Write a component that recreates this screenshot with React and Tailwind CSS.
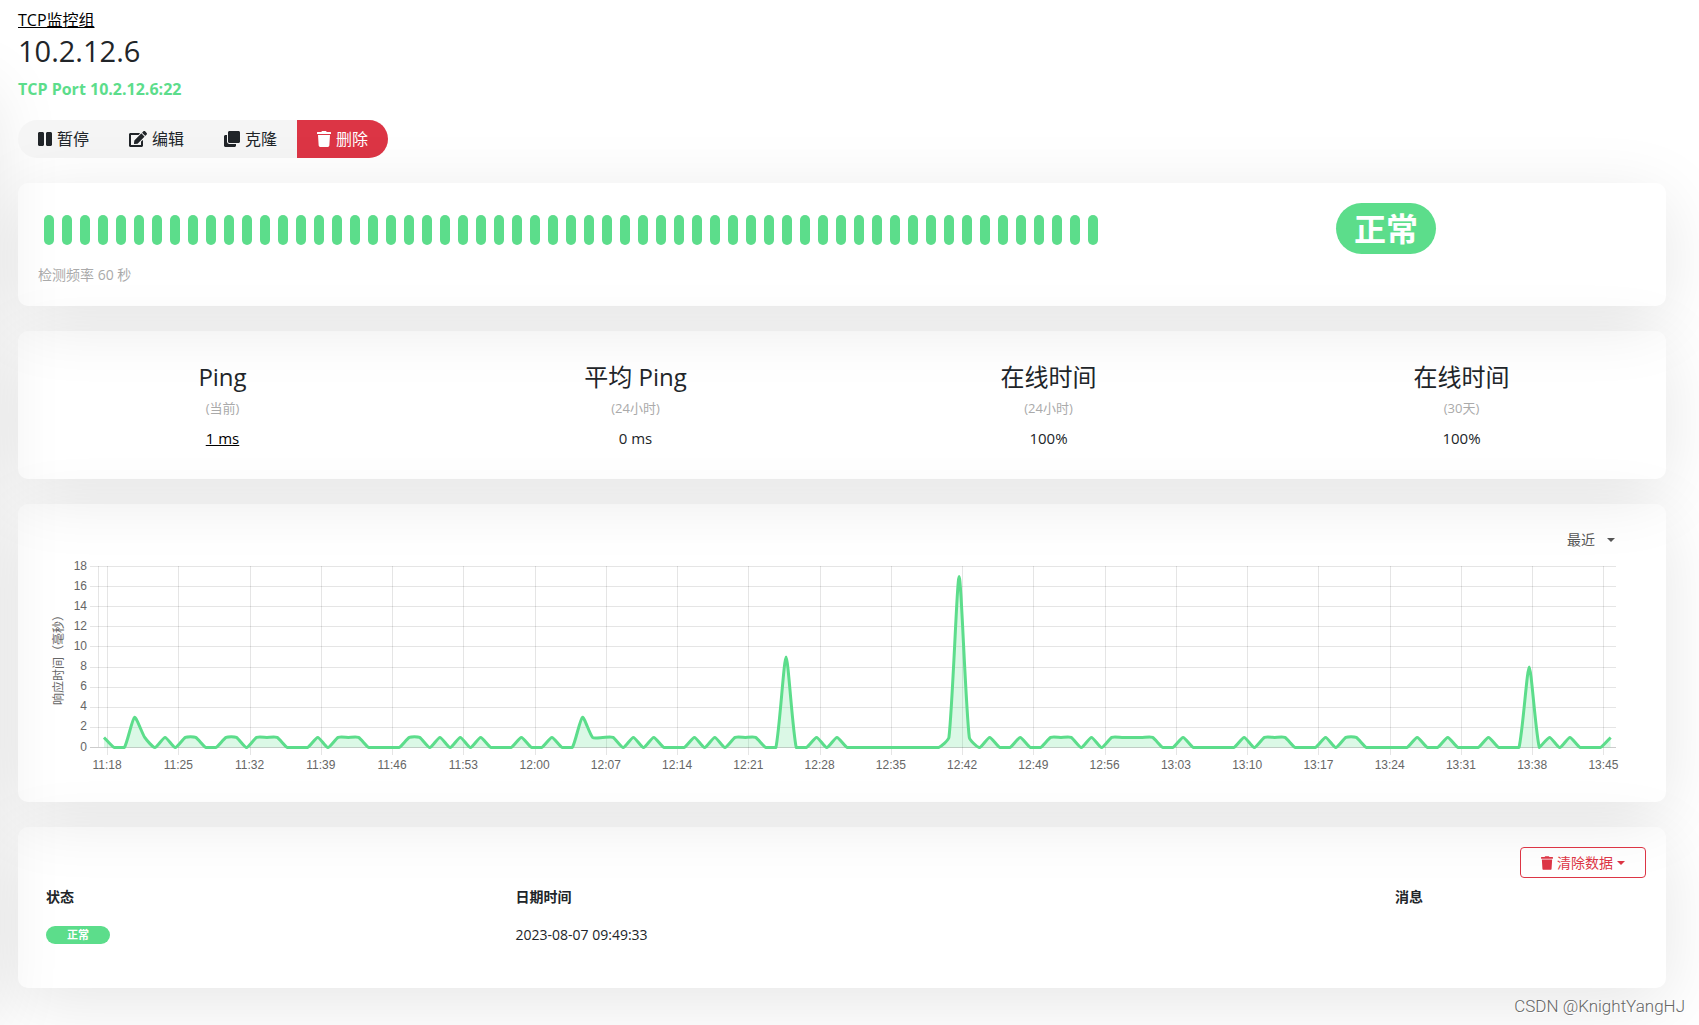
import { useMemo, useState } from "react";
import { FaPause, FaEdit, FaClone, FaTrash } from "react-icons/fa";

const BEAT_COUNT = 59;

const STATS = [
  { title: "Ping", range: "(当前)", value: "1 ms", link: true },
  { title: "平均 Ping", range: "(24小时)", value: "0 ms" },
  { title: "在线时间", range: "(24小时)", value: "100%" },
  { title: "在线时间", range: "(30天)", value: "100%" },
];

const EVENTS = [{ status: "正常", time: "2023-08-07 09:49:33", message: "" }];

// One sample per minute, starting at 11:18. Minutes that are not listed are 0 ms.
const PING_SPIKES = { 3: 3, 47: 3, 67: 9, 84: 17, 140: 8 };
const PING_ONES = [
  0, 4, 6, 8, 9, 12, 13, 15, 16, 17, 21, 23, 24, 25, 30, 31, 33, 35, 37, 41, 44,
  48, 49, 50, 52, 54, 58, 60, 62, 63, 64, 70, 72, 83, 85, 87, 90, 93, 94, 95,
  97, 99, 100, 101, 102, 103, 106, 112, 114, 115, 116, 120, 122, 123, 129, 132,
  136, 142, 144, 148,
];
const PINGS = Array.from(
  { length: 149 },
  (_, i) => PING_SPIKES[i] ?? (PING_ONES.includes(i) ? 1 : 0)
);

const X_LABELS = Array.from({ length: 22 }, (_, i) => {
  const total = 11 * 60 + 18 + i * 7;
  return `${Math.floor(total / 60)}:${String(total % 60).padStart(2, "0")}`;
});
const Y_LABELS = [0, 2, 4, 6, 8, 10, 12, 14, 16, 18];

const PLOT = { left: 60, right: 1578, top: 10, bottom: 191 };
const MINUTE = 10.18;

function toY(value) {
  return PLOT.bottom + 0.5 - (value / 18) * (PLOT.bottom - PLOT.top);
}

// Smooth line with a light tension, control points kept inside the plot
function buildPath(values) {
  const tension = 0.2;
  const points = values.map((v, i) => ({ x: 66 + i * MINUTE, y: toY(v) }));
  const clamp = (y) => Math.min(toY(0), Math.max(toY(18), y));

  const controls = points.map((p, i) => {
    const prev = points[i - 1] || p;
    const next = points[i + 1] || p;
    const d01 = Math.hypot(p.x - prev.x, p.y - prev.y);
    const d12 = Math.hypot(next.x - p.x, next.y - p.y);
    const fa = (tension * d01) / (d01 + d12);
    const fb = (tension * d12) / (d01 + d12);
    return {
      inX: p.x - fa * (next.x - prev.x),
      inY: clamp(p.y - fa * (next.y - prev.y)),
      outX: p.x + fb * (next.x - prev.x),
      outY: clamp(p.y + fb * (next.y - prev.y)),
    };
  });

  let line = `M${points[0].x} ${points[0].y}`;
  for (let i = 1; i < points.length; i++) {
    const a = controls[i - 1];
    const b = controls[i];
    line += `C${a.outX} ${a.outY} ${b.inX} ${b.inY} ${points[i].x} ${points[i].y}`;
  }
  const last = points[points.length - 1];
  return { line, area: `${line}L${last.x} ${toY(0)}L${points[0].x} ${toY(0)}Z` };
}

function Card({ className = "", children }) {
  return (
    <section
      className={`rounded-[10px] p-5 shadow-[0_15px_70px_rgba(0,0,0,0.1)] ${className}`}
    >
      {children}
    </section>
  );
}

function Caret() {
  return (
    <span className="inline-block border-x-4 border-t-4 border-x-transparent border-t-current" />
  );
}

function PingChart() {
  const { line, area } = useMemo(() => buildPath(PINGS), []);

  return (
    <svg
      viewBox="0 0 1608 226"
      className="block w-full"
      role="img"
      aria-label="响应时间（毫秒）"
      fontSize="12"
      fill="#666"
    >
      <g stroke="#000" strokeOpacity="0.1">
        {Y_LABELS.map((v) => {
          const y = Math.floor(toY(v)) + 0.5;
          return (
            <line
              key={v}
              x1={PLOT.left - 8}
              x2={PLOT.right}
              y1={y}
              y2={y}
              strokeOpacity={v === 0 ? 0.2 : 0.1}
            />
          );
        })}
        <line x1="60.5" x2="60.5" y1={PLOT.top} y2={PLOT.bottom} />
        {X_LABELS.map((label, i) => {
          const x = Math.round(69 + i * 7 * MINUTE) + 0.5;
          return (
            <line key={label} x1={x} x2={x} y1={PLOT.top} y2={PLOT.bottom + 8} />
          );
        })}
      </g>

      <path d={area} fill="#5cdd8b" fillOpacity="0.22" />
      <path
        d={line}
        fill="none"
        stroke="#5cdd8b"
        strokeWidth="3"
        strokeLinejoin="round"
      />

      <g className="font-['Liberation_Sans',sans-serif]">
        {Y_LABELS.map((v) => (
          <text key={v} x="49" y={toY(v) + 3} textAnchor="end">
            {v}
          </text>
        ))}
        {X_LABELS.map((label, i) => (
          <text key={label} x={69 + i * 7 * MINUTE} y="213" textAnchor="middle">
            {label}
          </text>
        ))}
      </g>
      <text transform="translate(25 101) rotate(-90)" textAnchor="middle">
        响应时间（毫秒）
      </text>
    </svg>
  );
}

export default function App() {
  const [paused, setPaused] = useState(false);

  return (
    <div className="relative min-h-screen overflow-hidden bg-white font-['Open_Sans','Noto_Sans_CJK_SC',sans-serif] text-[#212529]">
      {/* Monitor list, collapsed past the left edge */}
      <div className="absolute top-[75px] right-full bottom-4 mr-1.5 w-96 rounded-[10px] shadow-[0_15px_70px_rgba(0,0,0,0.1)]" />

      <main className="relative flex flex-col gap-[25px] pt-2 pr-[33px] pl-[18px]">
        <header>
          <a href="#group" className="block w-fit text-base text-black underline">
            TCP监控组
          </a>
          <h1 className="text-[29px] leading-[38px]">10.2.12.6</h1>
          <p className="mt-2 text-base leading-[22px] font-bold text-[#5cdd8b]">
            TCP Port 10.2.12.6:22
          </p>

          <div className="mt-5 flex h-[38px] w-fit overflow-hidden rounded-full bg-[#f5f5f5]">
            <button
              type="button"
              onClick={() => setPaused((value) => !value)}
              aria-pressed={paused}
              className="flex items-center gap-[5px] px-5"
            >
              <FaPause className="w-3.5" /> 暂停
            </button>
            <button type="button" className="flex items-center gap-[5px] px-5">
              <FaEdit className="w-[18px]" /> 编辑
            </button>
            <button type="button" className="flex items-center gap-[5px] px-5">
              <FaClone className="w-4" /> 克隆
            </button>
            <button
              type="button"
              className="flex items-center gap-[5px] bg-[#dc3545] px-5 text-white"
            >
              <FaTrash className="w-3.5" /> 删除
            </button>
          </div>
        </header>

        <Card>
          <div className="-mx-3 grid grid-cols-3">
            <div className="col-span-2 px-3">
              <div className="flex gap-2 overflow-hidden pt-3 pb-5 pl-1.5">
                {Array.from({ length: BEAT_COUNT }, (_, i) => (
                  <span
                    key={i}
                    className="h-[30px] w-2.5 shrink-0 rounded-full bg-[#5cdd8b]"
                  />
                ))}
              </div>
              <p className="mb-px text-sm leading-5 text-[#aaa]">检测频率 60 秒</p>
            </div>
            <div className="px-3 text-center">
              <span className="inline-block rounded-full bg-[#5cdd8b] px-[18px] text-[32px] leading-[51px] font-bold text-white">
                正常
              </span>
            </div>
          </div>
        </Card>

        <Card>
          <div className="-mx-[22px] grid grid-cols-4 pt-3 pb-[9px] text-center">
            {STATS.map((stat) => (
              <div key={stat.title + stat.range}>
                <h4 className="text-2xl leading-7">{stat.title}</h4>
                <p className="mt-[7px] text-[13px] leading-5 text-[#aaa]">
                  {stat.range}
                </p>
                <p className="mt-2 text-[15px] leading-6">
                  {stat.link ? (
                    <a href="#ping" className="text-black underline">
                      {stat.value}
                    </a>
                  ) : (
                    stat.value
                  )}
                </p>
              </div>
            ))}
          </div>
        </Card>

        <Card>
          <div className="flex h-8 justify-end pr-[31px]">
            <button
              type="button"
              className="flex items-center gap-3 text-sm text-[#555]"
            >
              最近 <Caret />
            </button>
          </div>
          <PingChart />
        </Card>

        <Card>
          <div className="flex justify-end">
            <button
              type="button"
              className="flex h-[31px] items-center gap-1 rounded border border-[#dc3545] px-5 text-sm text-[#dc3545]"
            >
              <FaTrash className="w-3" /> 清除数据 <Caret />
            </button>
          </div>
          <table className="mb-3.5 w-full table-fixed text-left text-sm">
            <thead>
              <tr className="h-[38px]">
                <th className="w-[29.2%] px-2 font-bold">状态</th>
                <th className="w-[54.7%] px-2 font-bold">日期时间</th>
                <th className="px-2 font-bold">消息</th>
              </tr>
            </thead>
            <tbody>
              {EVENTS.map((event) => (
                <tr key={event.time} className="h-[38px]">
                  <td className="px-2">
                    <span className="block w-16 rounded-full bg-[#5cdd8b] text-center text-[11px] leading-[18px] font-bold text-white">
                      {event.status}
                    </span>
                  </td>
                  <td className="px-2">{event.time}</td>
                  <td className="px-2">{event.message}</td>
                </tr>
              ))}
            </tbody>
          </table>
        </Card>
      </main>

      <footer className="relative py-1.5 pr-3.5 text-right font-[Roboto,sans-serif] text-[17px] leading-6 font-light text-[#666] text-shadow-[1px_1px_0_#fff]">
        CSDN @KnightYangHJ
      </footer>
    </div>
  );
}
